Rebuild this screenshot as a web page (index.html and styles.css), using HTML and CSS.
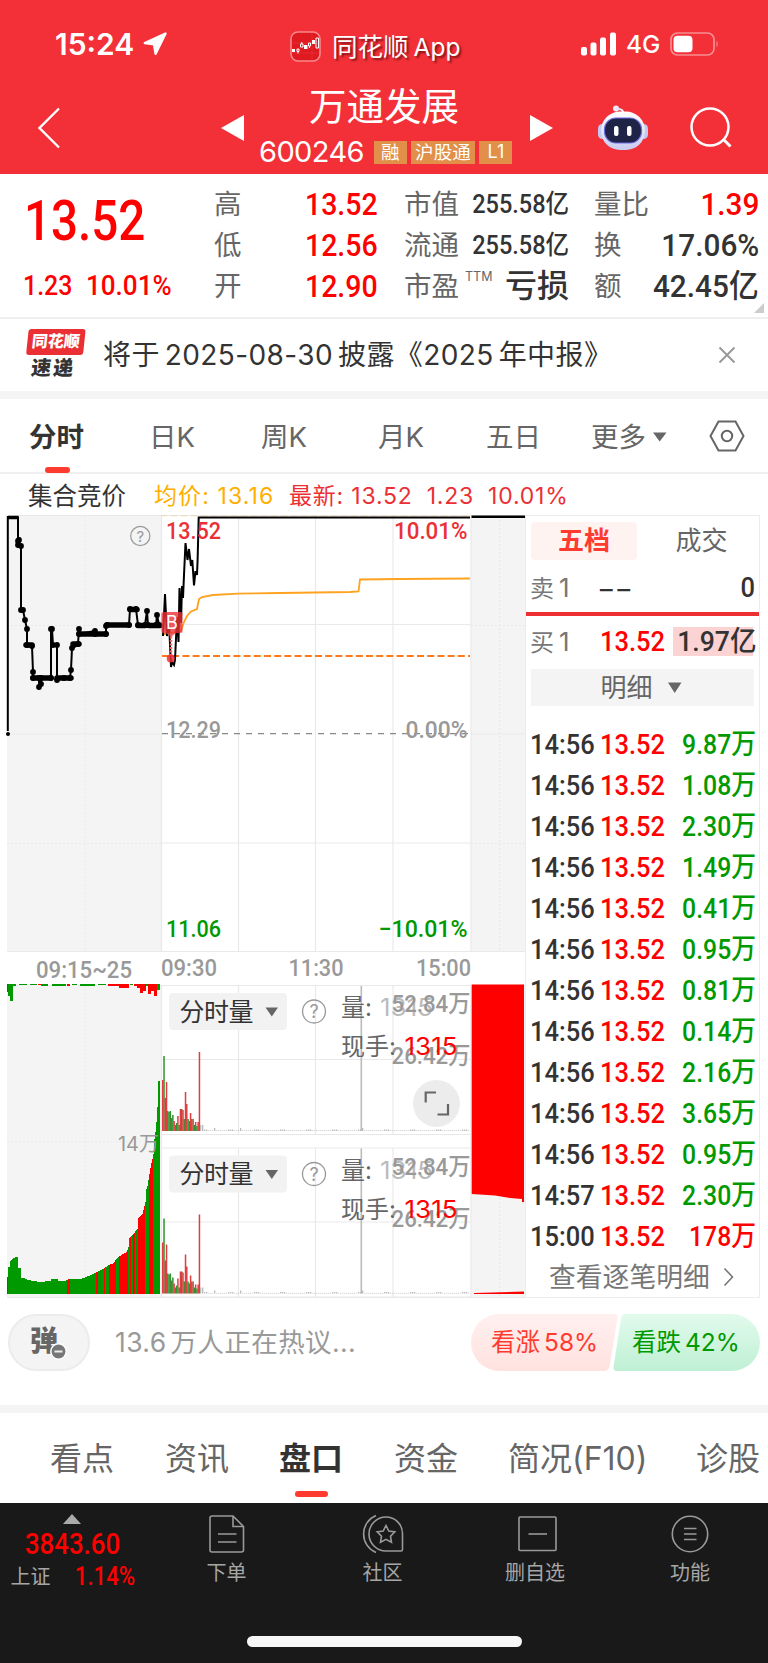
FILE: index.html
```html
<!DOCTYPE html>
<html lang="zh-CN">
<head>
    <meta charset="UTF-8">
    <meta name="viewport" content="width=device-width, initial-scale=1.0">
    <title>万通发展 600246</title>
    <link rel="stylesheet" href="styles.css">
</head>
<body>
    <header class="header">
        <div class="status-bar">
            <div class="status-time">
                <span>15:24</span>
                <svg width="24" height="24" viewBox="0 0 24 24"><path d="M22.5 1.5 L1.8 11 L11 12.3 L12.6 21.8 Z" fill="#fff" stroke="#fff" stroke-width="2.4" stroke-linejoin="round"/></svg>
            </div>
            <div class="status-app">
                <svg width="31" height="31" viewBox="0 0 31 31">
                    <rect x="1" y="1" width="29" height="29" rx="7" fill="#df1a20" stroke="#f8888c" stroke-width="1.6"/>
                    <path d="M2 12H29M2 22H29M22 2V29" stroke="#e63339" stroke-width=".7"/>
                    <path d="M2 18h3v3h-3zM14 14h3.500v4h-3.500zM22 9h3v4h-3z" fill="#fff"/>
                    <path d="M7 18h2v2.500h-2zM10.500 13h2.500v3h-2.500zM18.500 12h2v3h-2zM26 7h2.500v10h-2.500zM8 20.500v2M11.800 11v2M19.500 15v2" fill="none" stroke="#fff"/>
                </svg>
                <span>同花顺<i>App</i></span>
            </div>
            <div class="status-right">
                <svg width="36" height="24" viewBox="0 0 36 24" fill="#fff">
                    <rect x="0" y="15" width="6" height="8.500" rx="2"/>
                    <rect x="9.500" y="10.500" width="6" height="13" rx="2"/>
                    <rect x="19" y="5.500" width="6" height="18" rx="2"/>
                    <rect x="29" y="0.500" width="6" height="23" rx="2"/>
                </svg>
                <span>4G</span>
                <svg width="50" height="24" viewBox="0 0 50 24">
                    <rect x="1" y="1" width="43" height="22" rx="6.500" fill="none" stroke="#f98d91" stroke-width="1.700"/>
                    <rect x="3.500" y="3.700" width="19" height="16.600" rx="4" fill="#fff"/>
                    <path d="M46.500 8.500q2.500 3.500 0 7z" fill="#f98d91"/>
                </svg>
            </div>
        </div>
        <div class="title-bar">
            <svg class="back" width="24" height="42" viewBox="0 0 24 42"><path d="M22 1.500 L2.500 21 L22 40.500" fill="none" stroke="#fff" stroke-width="2.400"/></svg>
            <svg width="24" height="26" viewBox="0 0 24 26"><path d="M0 13 L23 0 V26 Z" fill="#fff"/></svg>
            <div class="stock">
                <h1>万通发展</h1>
                <div class="stock-code">
                    <span class="code">600246</span>
                    <span class="tag">融</span>
                    <span class="tag">沪股通</span>
                    <span class="tag">L1</span>
                </div>
            </div>
            <svg width="24" height="26" viewBox="0 0 24 26"><path d="M23 13 L0 0 V26 Z" fill="#fff"/></svg>
            <svg class="robot" width="50" height="46" viewBox="0 0 50 46">
                <defs><linearGradient id="shell" x1="0" y1="0" x2="0" y2="1"><stop offset="0" stop-color="#fff"/><stop offset="1" stop-color="#c9cbf0"/></linearGradient></defs>
                <path d="M25 9q1-5-5-5" fill="none" stroke="#e8e9fb" stroke-width="2"/>
                <circle cx="18" cy="3.500" r="3" fill="#e8e9fb"/>
                <rect x="0" y="19" width="10" height="15" rx="4.500" fill="#c3c9f0"/>
                <rect x="40" y="19" width="10" height="15" rx="4.500" fill="#c3c9f0"/>
                <rect x="3" y="6.500" width="44" height="38.500" rx="19.200" fill="url(#shell)"/>
                <rect x="6.500" y="13" width="37" height="25" rx="11.500" fill="#1f2346" stroke="#6b6de0" stroke-width="1.200"/>
                <rect x="16" y="21" width="4.500" height="10" rx="2" fill="#fff"/>
                <rect x="29" y="21" width="4.500" height="10" rx="2" fill="#fff"/>
            </svg>
            <svg width="42" height="42" viewBox="0 0 42 42"><circle cx="20" cy="20" r="18.500" fill="none" stroke="#fff" stroke-width="2.500"/><path d="M33 32l7.500 7.500" stroke="#fff" stroke-width="3"/></svg>
        </div>
    </header>

    <section class="quote">
        <div class="quote-price">
            <div class="price"><b class="num">13.52</b></div>
            <div class="change"><span class="num">1.23</span><span class="num">10.01%</span></div>
        </div>
        <dl class="quote-col red">
            <dt>高</dt><dd><b class="num">13.52</b></dd>
            <dt>低</dt><dd><b class="num">12.56</b></dd>
            <dt>开</dt><dd><b class="num">12.90</b></dd>
        </dl>
        <dl class="quote-col small">
            <dt>市值</dt><dd><b class="num">255.58亿</b></dd>
            <dt>流通</dt><dd><b class="num">255.58亿</b></dd>
            <dt>市盈<sup>TTM</sup></dt><dd><b class="loss">亏损</b></dd>
        </dl>
        <dl class="quote-col wide">
            <dt>量比</dt><dd class="red"><b class="num">1.39</b></dd>
            <dt>换</dt><dd><b class="num">17.06%</b></dd>
            <dt>额</dt><dd><b class="num">42.45亿</b></dd>
        </dl>
        <i class="corner"></i>
    </section>

    <section class="news">
        <div class="news-logo">
            <span class="logo-top">同花顺</span>
            <span class="logo-bottom">速递</span>
        </div>
        <p>将于<i></i>2025-08-30<i></i>披露《2025<i></i>年中报》</p>
        <svg width="18" height="18" viewBox="0 0 18 18"><path d="M1.500 1.500l15 15M16.500 1.500l-15 15" stroke="#999" stroke-width="2"/></svg>
    </section>

    <nav class="period-tabs">
        <span class="active">分时</span>
        <span>日K</span>
        <span>周K</span>
        <span>月K</span>
        <span>五日</span>
        <span>更多<svg width="14" height="10" viewBox="0 0 14 10"><path d="M0 .5h13.500L6.700 9.500z" fill="#666"/></svg></span>
        <svg width="36" height="32" viewBox="0 0 36 32"><path d="M9.500 1.500h17L34.500 16l-8 14.500h-17L1.500 16z" fill="none" stroke="#666" stroke-width="2"/><circle cx="18" cy="16" r="5.200" fill="none" stroke="#666" stroke-width="2"/></svg>
    </nav>

    <div class="legend">
        <span class="auction">集合竞价</span>
        <span class="avg">均价: 13.16</span>
        <span class="last">最新: 13.52</span>
        <span class="last">1.23</span>
        <span class="last">10.01%</span>
    </div>

    <main class="market">
        <svg class="chart" width="525" height="783" viewBox="0 515 525 783">
            <defs>
                <g id="volume-box">
                    <path class="grid" d="M162 985.500H471M162 1059.500H471M162 1134.500H471M238.500 985V1134M315.500 985V1134M393 985V1134"/>
                    <path d="M361.300 986V1131" stroke="#bbb" stroke-width="1.600"/>
                    <rect x="169" y="993" width="118" height="37" rx="4" fill="#f2f2f2"/>
                    <text class="cjk dark" x="179.500" y="1020.500" font-size="25" textLength="74">分时量</text>
                    <path d="M265.500 1007.500h12.500l-6.200 9z" fill="#666"/>
                    <circle cx="314" cy="1011.500" r="11.500" fill="none" stroke="#999" stroke-width="1.300"/>
                    <text class="help" x="314" y="1018" font-size="18" text-anchor="middle">?</text>
                    <text class="cjk mid" x="341" y="1016" font-size="24">量:</text>
                    <text class="volume-now" x="380" y="1016" textLength="53" lengthAdjust="spacingAndGlyphs" fill="#bbb">1315</text>
                    <text class="cjk mid" x="341" y="1055" font-size="24">现手:</text>
                    <text class="digit gray" x="391.500" y="1012" textLength="79" lengthAdjust="spacingAndGlyphs">52.84万</text>
                    <text class="digit gray" x="391.500" y="1064" textLength="79" lengthAdjust="spacingAndGlyphs">26.42万</text>
                    <text class="volume-now" x="404.500" y="1055" textLength="53" lengthAdjust="spacingAndGlyphs" fill="#f00">1315</text>
                </g>
            </defs>

            <!-- price panels -->
            <rect x="7" y="516" width="154" height="435.500" fill="#f4f4f4"/>
            <rect x="471" y="516" width="54" height="435.500" fill="#f4f4f4"/>
            <path class="grid" d="M7 734H161M471 734H525M7 951.500H525M7 515.500H525M162 624.500H471M162 843H471M161.500 515V951M238.500 515V951M315.500 515V951M393 515V951M471 515V951"/>
            <path class="grid dotted" d="M85 516V951M499.500 516V951M7 625.500H161M471 625.500H525M7 843.500H161M471 843.500H525"/>
            <path d="M161 515.500H471" stroke="#eed9bc" stroke-width="1.500" stroke-dasharray="6 4"/>
            <path d="M162 733.700H471" stroke="#888" stroke-width="1.200" stroke-dasharray="6 6"/>

            <path id="auction-line" fill="none" stroke="#000" stroke-width="2" d=""/>
            <g id="auction-dots"></g>
            <path d="M7.800 731V517H18.500" fill="none" stroke="#000" stroke-width="2"/>
            <path d="M8 517.500H18.500" stroke="#000" stroke-width="3.500"/>
            <circle cx="8" cy="734" r="2" />
            <circle cx="140.300" cy="536" r="9.600" fill="none" stroke="#999" stroke-width="1.200"/>
            <text class="help" x="140.300" y="541.500" font-size="15" text-anchor="middle">?</text>

            <path d="M164 634L172 633L181 631L184 622L187 616L191 611.500L197 609L199 599L202 597L213 595L238 593.700L280 593L350 592L358.500 591.500L360 579.500L400 579L470 578.500" fill="none" stroke="#ffa21f" stroke-width="1.800"/>
            <path d="M162 656H470" stroke="#ff7a1a" stroke-width="1.800" stroke-dasharray="7 3.200"/>
            <path d="M163 636L165 594L167 636L169 622L171 667L172 662L174 665L175 660L177 617L178.500 642L179.500 588L181 623L182 586L183 598L184 575L185.500 543L187.500 560L189 549L191 566L192.300 560L194 585.500L195.500 571L197 575L197.600 560L198.700 517.500H470" fill="none" stroke="#000" stroke-width="2"/>
            <path d="M471.500 516.800H525" stroke="#000" stroke-width="2.400"/>

            <path d="M171 633V656" stroke="#ef6a6e" stroke-width="2.500" stroke-dasharray="2 1.500"/>
            <path d="M166 633h10l-5 4z" fill="#ee4f53" opacity=".8"/>
            <circle cx="170.700" cy="658.500" r="4" fill="#ee2f35" opacity=".85"/>
            <rect x="161.500" y="612" width="21" height="21" rx="2" fill="#ec3237" opacity=".8"/>
            <text x="172" y="629" class="b-mark" text-anchor="middle">B</text>

            <text class="digit up" x="166" y="539" textLength="55" lengthAdjust="spacingAndGlyphs">13.52</text>
            <text class="digit up" x="394" y="539" textLength="73.500" lengthAdjust="spacingAndGlyphs">10.01%</text>
            <text class="digit gray" x="166" y="738" textLength="55" lengthAdjust="spacingAndGlyphs">12.29</text>
            <text class="digit gray" x="405.500" y="738" textLength="62" lengthAdjust="spacingAndGlyphs">0.00%</text>
            <text class="digit down" x="166" y="937" textLength="55" lengthAdjust="spacingAndGlyphs">11.06</text>
            <text class="digit down" x="378.500" y="937" textLength="89" lengthAdjust="spacingAndGlyphs">−10.01%</text>
            <text class="digit gray" x="36" y="977.500" textLength="96" lengthAdjust="spacingAndGlyphs">09:15~25</text>
            <text class="digit gray" x="161" y="975.500" textLength="56" lengthAdjust="spacingAndGlyphs">09:30</text>
            <text class="digit gray" x="288.500" y="975.500" textLength="55" lengthAdjust="spacingAndGlyphs">11:30</text>
            <text class="digit gray" x="416" y="975.500" textLength="55" lengthAdjust="spacingAndGlyphs">15:00</text>

            <!-- volume panels -->
            <rect x="7" y="985" width="154" height="312.500" fill="#f4f4f4"/>
            <rect x="471" y="985" width="54" height="312.500" fill="#f4f4f4"/>
            <path class="grid" d="M161.500 985V1297M471 985V1297M7 1297.500H525"/>
            <path class="grid dotted" d="M85 985V1297M499.500 1190V1297M7 1142H161"/>
            <path d="M471.700 984.500H524V1202H522V1199L510 1198L495 1195.500L471.700 1194Z" fill="#f00"/>
            <path d="M474 1294V1293L524 1291.500V1294Z" fill="#f00"/>
            <g id="auction-volume" shape-rendering="crispEdges"></g>
            <text class="cjk gray" x="118" y="1151" font-size="20" textLength="41" lengthAdjust="spacingAndGlyphs">14万</text>

            <use href="#volume-box"/>
            <g class="minute-volume"></g>
            <use href="#volume-box" y="162.500"/>
            <g class="minute-volume" transform="translate(0 162.500)"></g>

            <circle cx="436.500" cy="1103.500" r="23.500" fill="#ececec"/>
            <path d="M425.700 1102.500V1092.500H436M448 1104V1114.500H437.500" fill="none" stroke="#666" stroke-width="2.200"/>
        </svg>

        <aside class="orders">
            <div class="order-tabs"><b>五档</b><span>成交</span></div>
            <div class="order-row sell"><span>卖<i>1</i></span><em>−−</em><strong class="num">0</strong></div>
            <div class="order-row buy"><span>买<i>1</i></span><b class="num">13.52</b><strong><span class="num">1.97亿</span></strong></div>
            <div class="detail-btn">明细<svg width="14" height="11" viewBox="0 0 14 11"><path d="M0 .500h13.500L6.700 11z" fill="#666"/></svg></div>
            <div class="ticks" id="ticks"></div>
            <div class="more-link">查看逐笔明细<svg width="11" height="20" viewBox="0 0 11 20"><path d="M1.500 1.500L9.500 10l-8 8.500" fill="none" stroke="#777" stroke-width="1.600"/></svg></div>
        </aside>
    </main>

    <section class="comment-bar">
        <div class="danmu">弹<svg width="17" height="17" viewBox="0 0 17 17"><circle cx="8.500" cy="8.500" r="7.700" fill="#777" stroke="#fff" stroke-width="1.500"/><path d="M4.500 8.500h8" stroke="#eee" stroke-width="2"/></svg></div>
        <span class="hot">13.6<i></i>万人正在热议...</span>
        <div class="vote">
            <svg width="289" height="57" viewBox="0 0 289 57">
                <defs>
                    <linearGradient id="rise" x1="0" y1="0" x2="0" y2="1"><stop offset="0" stop-color="#fff0ef"/><stop offset="1" stop-color="#ffe2df"/></linearGradient>
                    <linearGradient id="fall" x1="0" y1="0" x2="0" y2="1"><stop offset="0" stop-color="#e2faec"/><stop offset="1" stop-color="#bff0d4"/></linearGradient>
                </defs>
                <path d="M28.500 0H143q4 0 3.500 4L138.500 52q-1 5-5 5H28.500a28.500 28.500 0 0 1 0-57z" fill="url(#rise)"/>
                <path d="M155 0H260.500a28.500 28.500 0 0 1 0 57H146q-4 0-3.500-4L150 5q1-5 5-5z" fill="url(#fall)"/>
            </svg>
            <span class="rise">看涨<i></i>58%</span>
            <span class="fall">看跌<i></i>42%</span>
        </div>
    </section>

    <nav class="info-tabs">
        <span>看点</span>
        <span>资讯</span>
        <span class="active">盘口</span>
        <span>资金</span>
        <span>简况(F10)</span>
        <span>诊股</span>
    </nav>

    <footer class="footer">
        <div class="toolbar">
            <div class="index">
                <i class="up-arrow"></i>
                <b class="num">3843.60</b>
                <div><span>上证</span><b class="num">1.14%</b></div>
            </div>
            <div class="tool">
                <svg width="36" height="38" viewBox="0 0 36 38"><path d="M2.500 1H24L34.500 11.500V35q0 2-2 2H3q-2 0-2-2V3q0-2 2-2zM24 1V11.500H34.500M9 19H27.500M9 27H27.500"/></svg>
                <span>下单</span>
            </div>
            <div class="tool">
                <svg width="42" height="40" viewBox="0 0 42 40"><path d="M24 3a16.500 16.500 0 0 0 0 34H39q1.500 0 1.500-1.500V19.500A16.500 16.500 0 0 0 24 3zM14 1.500a20 20 0 0 0 0 37M24 11.500l2.800 5.500 6 .900-4.300 4.300 1 6-5.500-2.800-5.500 2.800 1-6-4.300-4.300 6-.900z"/></svg>
                <span>社区</span>
            </div>
            <div class="tool remove">
                <svg width="39" height="36" viewBox="0 0 39 36"><rect x="1" y="1" width="37" height="33.500" rx="1"/><path d="M10.500 18H29"/></svg>
                <span>删自选</span>
            </div>
            <div class="tool">
                <svg width="38" height="38" viewBox="0 0 38 38"><circle cx="19" cy="19" r="17.700"/><path d="M13 13.500H25.500M13 19H25.500M13 24.500H25.500"/></svg>
                <span>功能</span>
            </div>
        </div>
        <i class="home-bar"></i>
    </footer>

    <script src="script.js"></script>
</body>
</html>
```
FILE: script.js
```js
const GREEN = "#009900";
const RED = "#ff0000";

// tick list, the first one is scrolled almost out of view
const ticks = [
    ["14:56", "1.02万"],
    ["14:56", "9.87万"], ["14:56", "1.08万"], ["14:56", "2.30万"], ["14:56", "1.49万"],
    ["14:56", "0.41万"], ["14:56", "0.95万"], ["14:56", "0.81万"], ["14:56", "0.14万"],
    ["14:56", "2.16万"], ["14:56", "3.65万"], ["14:56", "0.95万"], ["14:57", "2.30万"],
    ["15:00", "178万", "red"],
];

document.getElementById("ticks").innerHTML = ticks.map(([time, volume, side]) => `
    <div class="tick">
        <span class="num">${time}</span>
        <b class="num">13.52</b>
        <em class="num ${side || ""}">${volume}</em>
    </div>`).join("");

// call auction price line, every vertex gets a dot
const auction = [
    [18, 517], [18, 541], [19, 540], [18, 545], [21, 546], [21, 610], [23, 610], [25, 620], [27, 629],
    [27, 645], [32, 646], [33, 672], [33, 678], [39, 678], [39, 687], [41, 684], [41, 678], [51, 678],
    [51, 629], [52, 629], [53, 645], [57, 645], [57, 680], [64, 678], [70, 678], [71, 670],
    [72, 648], [74, 645], [78, 644], [79, 629], [79, 634], [95, 631], [95, 634], [106, 634], [106, 626],
    [107, 625], [129, 625], [130, 609], [136, 609], [138, 625], [145, 625], [147, 611], [148, 625],
    [156, 625], [157, 615], [159, 625],
];
const runs = [[33, 41, 678], [41, 51, 678], [57, 71, 678], [79, 106, 634], [107, 129, 625], [130, 137, 609.500], [138, 145, 625.500], [149, 160, 625.500], [26, 32, 645], [73, 79, 644]];

document.getElementById("auction-line").setAttribute("d", "M" + auction.map(p => p.join(" ")).join("L"));
document.getElementById("auction-dots").innerHTML =
    auction.slice(1).map(([x, y]) => `<circle cx="${x}" cy="${y}" r="2.900"/>`).join("") +
    runs.map(([a, b, y]) => `<path d="M${a} ${y}H${b}" stroke="#000" stroke-width="5.500" stroke-linecap="round"/>`).join("");

function bar(x, y, w, h, color) {
    return `<rect x="${x}" y="${y}" width="${w}" height="${h}" fill="${color}"/>`;
}

// call auction volume
const profile = [
    [7, 17], [7.900, 17], [8, 27], [9.500, 27], [10, 33], [13, 36], [17, 37], [17.900, 37], [18, 26], [20.500, 26], [21, 16],
    [24, 16], [27, 14], [40, 12], [50, 13], [50.500, 15], [57, 15], [57.500, 13], [65, 13], [68, 15], [80, 15], [91, 19],
    [96, 22], [103, 25], [108, 29], [112, 30], [118, 37], [126, 42], [128.500, 48], [129, 56], [133, 60], [137, 65], [137.500, 76],
    [142, 80], [145, 92], [145.500, 104], [147, 108], [150, 126], [153, 140], [154, 155], [155.500, 165], [157, 187], [158, 213], [160, 213],
];
const redRanges = [[7, 7], [67, 69], [96, 97], [104, 104], [109, 115], [119, 127], [130, 130], [133, 134], [138, 144], [149, 152]];

function heightAt(x) {
    for (let i = 1; i < profile.length; i++) {
        const [x0, h0] = profile[i - 1];
        const [x1, h1] = profile[i];
        if (x <= x1) {
            return h0 + (h1 - h0) * (x - x0) / (x1 - x0);
        }
    }
    return 0;
}

let volume = "";
for (let x = 7; x < 160; x++) {
    const h = Math.round(heightAt(x));
    const red = redRanges.some(([a, b]) => x >= a && x <= b);
    volume += bar(x, 1294 - h, 1, h, red ? RED : GREEN);
}
// unmatched volume hanging from the top
[[7, 1, 8, 1], [8, 2, 12, 0], [10, 3, 17, 0], [13, 3, 2, 0], [19, 8, 1, 0], [30, 7, 1, 0], [38, 3, 1, 1], [41, 7, 2, 0],
 [52, 14, 2, 0], [67, 3, 2, 1], [72, 5, 1, 0], [80, 15, 2, 0], [98, 8, 1, 0], [108, 11, 2, 1], [119, 10, 4, 1], [130, 3, 1, 0],
 [134, 3, 2, 1], [137, 3, 4, 1], [140, 3, 9, 1], [143, 3, 7, 1], [146, 2, 2, 0], [148, 3, 10, 1], [151, 3, 7, 1], [154, 3, 12, 1], [157, 3, 6, 0],
].forEach(([x, w, h, red]) => {
    volume += bar(x, 984, w, h, red ? RED : GREEN);
});
document.getElementById("auction-volume").innerHTML = volume;

// minute volume: height + colour
const minutes = [
    [51, 1], [75, 0], [33, 1], [49, 1], [20, 0], [19, 0], [20, 0], [13, 1], [16, 0], [10, 1], [6, 1], [8, 0], [15, 1],
    [6, 0], [22, 1], [22, 0], [21, 1], [12, 0], [39, 1], [27, 1], [12, 0], [10, 0], [18, 1], [12, 0], [12, 1], [6, 0], [9, 1],
    [5, 0], [9, 1], [79, 1],
];
let bars = minutes.map(([h, red], i) => bar((162 + i * 1.265).toFixed(2), 1131 - h, 1.500, h, red ? "#e23c40" : "#2f942f")).join("");
for (let x = 200; x < 470; x += 2) {
    const h = x < 204 ? 6 : x === 214 || x === 240 || x === 362 ? 3 : (x * 7 % 13 > 9 ? 1.500 : 0.600);
    bars += bar(x, 1131 - h, 1.300, h, "#bbb");
}
document.querySelectorAll(".minute-volume").forEach(g => {
    g.innerHTML = bars;
});
```
FILE: styles.css
```css
/* styles.css */
* {
    box-sizing: border-box;
}

body {
    margin: 0;
    width: 768px;
    height: 1663px;
    overflow: hidden;
    background-color: #fff;
    color: #333;
    font-family: Inter, "Noto Sans CJK SC", sans-serif;
    font-size: 26px;
    line-height: 1;
}

h1, p, dl, dd {
    margin: 0;
}

i, em {
    font-style: normal;
}

svg {
    display: block;
    flex: none;
}

.num {
    display: inline-block;
    font-family: Roboto, "Noto Sans CJK SC", sans-serif;
    font-weight: 500;
    transform: scaleX(0.89);
    transform-origin: right center;
    white-space: nowrap;
}

.red {
    color: #f00;
}

/* header */
.header {
    height: 174px;
    background-color: #f33038;
    color: #fff;
}

.status-bar {
    display: grid;
    grid-template-columns: 235px 291px 1fr;
    padding: 30px 0 0 55px;
    height: 84px;
}

.status-time, .status-app, .status-right {
    display: flex;
    align-items: center;
    height: 30px;
}

.status-time {
    gap: 9px;
    font-size: 30px;
    font-weight: 600;
    height: 28px;
}

.status-app {
    gap: 11px;
    font-size: 25.500px;
    text-shadow: 2px 2px 2px rgba(60, 0, 0, 0.6);
    height: 33px;
}

.status-app i {
    margin-left: 5px;
    font-size: 24.500px;
}

.status-right {
    height: 28px;
    font-size: 24.500px;
    font-weight: 500;
    gap: 9px;
}

.status-right span {
    width: 35px;
}

.title-bar {
    display: grid;
    grid-template-columns: 184px 37px 272px 68px 92px 42px;
    padding-left: 37px;
    height: 90px;
    align-items: center;
}

.title-bar > svg {
    margin-top: -2px;
}

.stock h1 {
    margin: -6px 0 0 51px;
    font-size: 37.500px;
    font-weight: 400;
    line-height: 44px;
}

.stock-code {
    display: flex;
    align-items: center;
    gap: 4px;
    height: 30px;
    margin: 9px 0 0 1px;
}

.code {
    width: 111px;
    margin-top: -2px;
    font-size: 29px;
    letter-spacing: -0.6px;
}

.tag {
    height: 23px;
    padding: 0 7px;
    background-color: #e18f49;
    font-size: 18.500px;
    line-height: 22px;
    letter-spacing: 0.1px;
    white-space: nowrap;
}

.tag:nth-child(3) {
    padding: 0 4.500px;
}

.tag:nth-child(4) {
    padding: 0 8px;
    font-size: 18px;
}

/* quote */
.quote {
    position: relative;
    display: grid;
    grid-template-columns: 190px 190px 190px 164px;
    padding-left: 24px;
    height: 145px;
    border-bottom: 2px solid #efefef;
}

.quote-price {
    color: #f00;
}

.quote-price .num {
    transform-origin: left center;
}

.price {
    padding-top: 19px;
    font-size: 55px;
    height: 98px;
}

.price .num {
    transform: scaleX(0.865);
}

.change {
    display: flex;
    gap: 7px;
    font-size: 28px;
    margin-left: -1px;
}

.change .num:last-child {
    transform: scaleX(0.93);
}

.quote-col {
    display: grid;
    grid-template-columns: auto minmax(0, 1fr);
    grid-auto-rows: 41px;
    align-items: center;
    padding-top: 10px;
    width: 164px;
    font-size: 27.500px;
    height: 133px;
}

.quote-col dt {
    color: #666;
    white-space: nowrap;
}

/* wide values run over to the left, the right edge stays put */
.quote-col dd {
    display: flex;
    justify-content: flex-end;
    margin-top: -2px;
    font-size: 32px;
    white-space: nowrap;
}

.quote-col.small {
    width: 165px;
}

.quote-col.small .num {
    font-size: 26px;
    transform: scaleX(0.905);
}

.quote-col.wide {
    width: 165px;
}

.quote-col.wide .num {
    transform: scaleX(0.93);
}

.quote-col .loss {
    font-size: 32px;
    font-weight: 500;
}

.quote-col sup {
    margin-left: 6px;
    font-size: 12.500px;
    vertical-align: 15px;
    line-height: 0;
}

.corner {
    position: absolute;
    right: 4px;
    bottom: 4px;
    border: 5px solid #ccc;
    border-top-color: transparent;
    border-left-color: transparent;
}

/* news */
.news {
    display: grid;
    grid-template-columns: 77px 615px 18px;
    align-items: center;
    padding-left: 26px;
    height: 80px;
    border-bottom: 8px solid #f4f4f4;
    font-size: 28px;
}

.news p {
    letter-spacing: 0.4px;
    white-space: nowrap;
}

.news p i {
    margin-left: 5px;
}

.news-logo {
    display: flex;
    flex-direction: column;
    width: 57px;
    text-align: center;
    font-weight: 900;
    transform: skewX(-6deg);
}

.logo-top {
    height: 26px;
    border-radius: 3px;
    background-color: #ea3034;
    color: #fff;
    font-size: 16px;
    line-height: 25px;
}

.logo-bottom {
    font-size: 20px;
    line-height: 26px;
    letter-spacing: 2px;
}

/* period tabs */
.period-tabs {
    position: relative;
    display: grid;
    grid-template-columns: 120px 112px 117px 108px 105px 118px 36px;
    align-items: center;
    padding: 0 0 0 29px;
    height: 75px;
    border-bottom: 2px solid #efefef;
    color: #666;
    font-size: 27.500px;
}

.period-tabs span {
    display: flex;
    align-items: center;
    white-space: nowrap;
    padding-top: 4px;
}

.period-tabs span svg {
    margin: -2px 0 0 7px;
}

.period-tabs .active, .info-tabs .active {
    position: relative;
    color: #333;
    font-weight: 700;
}

.period-tabs .active::after {
    content: "";
    position: absolute;
    left: 16px;
    top: 47px;
    width: 25px;
    height: 6px;
    border-radius: 3px;
    background-color: #ff3b30;
}

/* legend */
.legend {
    display: flex;
    align-items: center;
    height: 41px;
    padding: 4px 0 0 28px;
    font-size: 23px;
    letter-spacing: 0.8px;
    white-space: nowrap;
}

.legend .auction {
    width: 126px;
    font-size: 24.500px;
    letter-spacing: 0;
}

.legend .avg {
    width: 135px;
    color: #ffaf00;
    letter-spacing: 1.1px;
}

.legend .last {
    margin-right: 14px;
    color: #eb3035;
}

/* chart */
.market {
    display: flex;
    height: 783px;
}

.grid {
    fill: none;
    stroke: #e9e9e9;
    stroke-width: 1.2;
}

.dotted {
    stroke-dasharray: 2 2;
}

.digit {
    font-family: Roboto, "Noto Sans CJK SC", sans-serif;
    font-size: 24px;
    font-weight: 500;
}

.volume-now {
    font-size: 24px;
}

.up {
    fill: #eb3035;
}

.down {
    fill: #009900;
}

.gray {
    fill: #999;
}

.mid {
    fill: #666;
}

.dark {
    fill: #333;
}

.help {
    fill: #999;
}

.b-mark {
    fill: #fff;
    font-size: 18px;
}

/* orders */
.orders {
    width: 235px;
    border: 1.500px solid #ececec;
}

.order-tabs {
    display: grid;
    grid-template-columns: 106px 1fr;
    padding: 6px 0 0 5px;
    height: 52px;
    line-height: 38px;
    color: #666;
    text-align: center;
}

.order-tabs b {
    height: 38px;
    border-radius: 4px;
    background-color: #fff3f2;
    color: #ff3b30;
}

.order-tabs span {
    padding-left: 7px;
}

.order-row {
    display: grid;
    grid-template-columns: 70px 71px 1fr;
    align-items: center;
    height: 45px;
    padding: 0 4px;
    color: #333;
    font-size: 28px;
}

.order-row > span {
    color: #777;
    font-size: 24px;
}

.order-row i {
    margin-left: 5px;
    font-size: 26px;
}

.order-row strong {
    text-align: right;
    font-weight: 500;
}

.order-row > .num, .tick .num {
    transform: scaleX(0.91);
    transform-origin: left center;
}

.order-row > strong.num {
    transform-origin: right center;
}

.order-row em {
    margin-left: -3px;
    font-size: 28px;
    letter-spacing: -1px;
}

.sell {
    height: 48px;
    margin-bottom: 1px;
    border-bottom: 4px solid #eb2f33;
    padding-bottom: 4px;
}

.buy {
    height: 49px;
}

.buy b {
    color: #f00;
}

.buy strong {
    height: 29px;
    margin: 0 3px 0 2px;
    background-color: #fbd3d3;
    line-height: 29px;
    direction: rtl;
}

.buy strong span {
    direction: ltr;
    margin-right: -4px;
    transform: scaleX(0.95);
}

.detail-btn {
    display: flex;
    align-items: center;
    justify-content: center;
    gap: 15px;
    width: 223px;
    height: 37px;
    margin: 3px 0 0 5px;
    padding-right: 3px;
    background-color: #f4f4f4;
    color: #666;
    font-size: 26px;
}

.ticks {
    margin-top: 9px;
    padding-left: 4px;
    height: 543px;
    overflow: hidden;
}

.tick {
    display: grid;
    grid-template-columns: 70px 71px 1fr;
    align-items: center;
    height: 41px;
    padding-right: 3px;
    font-size: 28px;
}

.tick:first-child {
    margin-top: -32px;
}

.tick b {
    color: #f00;
}

.tick em {
    text-align: right;
    color: #009900;
}

.tick em.num {
    transform: scaleX(0.885);
    transform-origin: right center;
}

.tick em.red {
    color: #f00;
}

.more-link {
    display: flex;
    align-items: center;
    gap: 13px;
    height: 38px;
    padding-left: 23px;
    color: #777;
    font-size: 26.800px;
}

/* comment bar */
.comment-bar {
    display: grid;
    grid-template-columns: 107px 356px 289px;
    align-items: center;
    height: 115px;
    padding: 0 0 18px 8px;
    border-bottom: 8px solid #f4f4f4;
}

.danmu {
    position: relative;
    width: 82px;
    height: 57px;
    padding-left: 20px;
    border: 2px solid #ececec;
    border-radius: 29px;
    background-color: #f4f4f4;
    color: #666;
    font-size: 28px;
    font-weight: 900;
    line-height: 50px;
}

.danmu svg {
    position: absolute;
    left: 40px;
    top: 27px;
}

.hot {
    color: #999;
    font-size: 26.500px;
    letter-spacing: 0.4px;
    white-space: nowrap;
}

.hot i, .vote i {
    margin-left: 4px;
}

.vote {
    position: relative;
    height: 57px;
    font-size: 24.500px;
    line-height: 57px;
    white-space: nowrap;
}

.vote span {
    position: absolute;
    top: 0;
    left: 20px;
    color: #ff3b30;
}

.vote .fall {
    left: 161px;
    color: #009900;
}

/* info tabs */
.info-tabs {
    display: grid;
    grid-template-columns: 115px 114px 115px 114px 188px 1fr;
    align-items: center;
    height: 90px;
    padding: 2px 0 0 50px;
    color: #666;
    font-size: 32px;
    white-space: nowrap;
}

.info-tabs .active::after {
    content: "";
    position: absolute;
    left: 16px;
    top: 48px;
    width: 33px;
    height: 6px;
    border-radius: 3px;
    background-color: #ff3b30;
}

/* footer */
.footer {
    height: 160px;
    background-color: #191919;
    color: #a6a6a6;
    font-size: 20px;
}

.toolbar {
    display: grid;
    grid-template-columns: 144px 165px 147px 158px 152px;
    height: 133px;
}

.index {
    display: flex;
    flex-direction: column;
    align-items: center;
    padding-top: 11px;
}

.index .num {
    color: #f00;
    font-size: 29px;
    transform-origin: center;
    margin-top: 6px;
}

.index div {
    display: flex;
    align-items: center;
    gap: 20px;
    padding: 2px 0 0 5px;
}

.index div span {
    padding-top: 3px;
}

.index div .num {
    margin: 3px 0 0;
    font-size: 25px;
}

.up-arrow {
    border: 9px solid transparent;
    border-top: 0;
    border-bottom: 10px solid #aaa;
}

.tool {
    display: flex;
    flex-direction: column;
    align-items: center;
    padding-top: 11px;
}

.tool svg {
    height: 40px;
    fill: none;
    stroke: #999;
    stroke-width: 1.6;
}

.tool span {
    margin-top: 9px;
}

.remove svg {
    margin-left: 4px;
}

.home-bar {
    display: block;
    width: 275px;
    height: 11px;
    margin: 0 auto;
    border-radius: 6px;
    background-color: #f7f7f7;
}
```
